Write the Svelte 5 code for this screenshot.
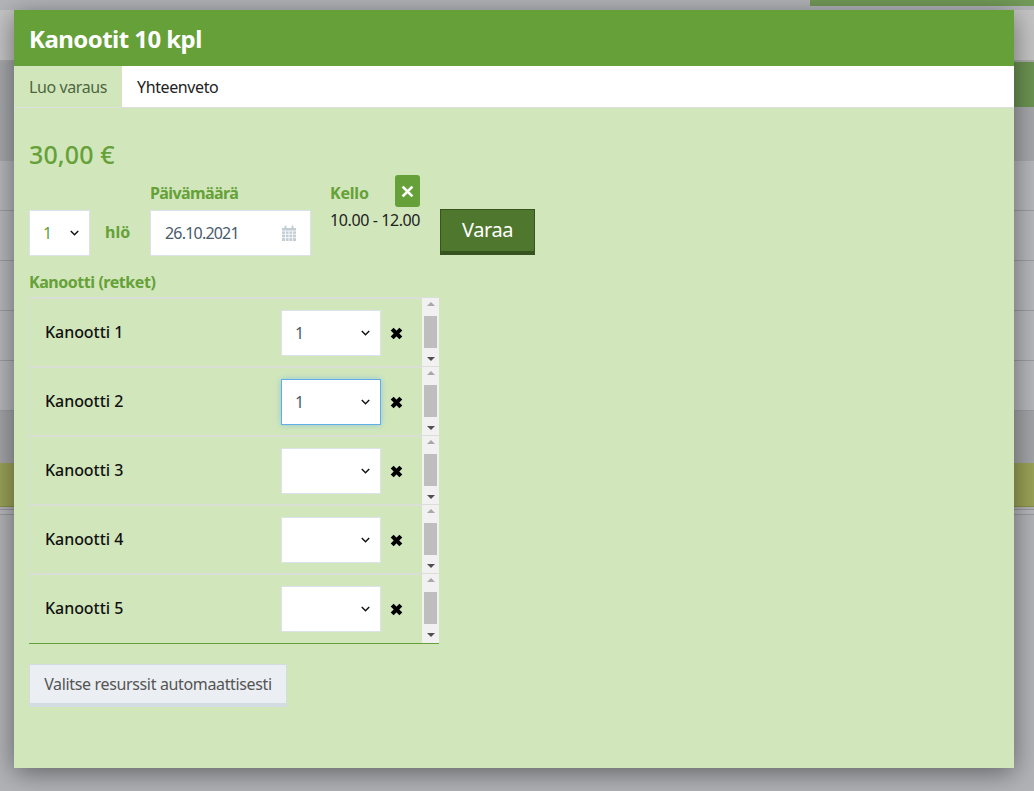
<script>
  const rows = [
    { name: 'Kanootti 1', value: '1', focus: false },
    { name: 'Kanootti 2', value: '1', focus: true },
    { name: 'Kanootti 3', value: '', focus: false },
    { name: 'Kanootti 4', value: '', focus: false },
    { name: 'Kanootti 5', value: '', focus: false }
  ];
</script>

<div class="page">
  <div class="strip top"><span class="topbar"></span></div>
  <div class="strip hero"></div>
  <div class="strip nav"><span class="navbar"></span></div>
  <div class="strip dark d1"></div>
  <div class="strip line"></div>
  <div class="strip line"></div>
  <div class="strip line"></div>
  <div class="strip line"></div>
  <div class="strip line"></div>
  <div class="strip dark d2"></div>
  <div class="strip olive"></div>
  <div class="strip foot"></div>
</div>

<section class="modal">
  <header class="head">Kanootit 10 kpl</header>
  <nav class="tabs">
    <span class="tab active">Luo varaus</span>
    <span class="tab">Yhteenveto</span>
  </nav>
  <div class="body">
    <div class="price">30,00 €</div>
    <div class="controls">
      <div class="field people">
        <div class="selwrap">
          <select class="sel green"><option>1</option></select>
          <svg class="chev" viewBox="0 0 8 5" width="9" height="6"><path d="M.7.8 4 4 7.3.8" fill="none" stroke="#111" stroke-width="1.3"/></svg>
        </div>
      </div>
      <span class="hlo">hlö</span>
      <div class="field date">
        <span class="lbl tight">Päivämäärä</span>
        <div class="datebox">
          <span class="datetext">26.10.2021</span>
          <svg viewBox="0 0 16 16" width="16" height="16"><path fill="#c3cdd6" d="M1 3h2.500V1.500a1 1 0 0 1 2 0V3h5V1.500a1 1 0 0 1 2 0V3H15v13H1z"/><path stroke="#fff" stroke-width=".8" d="M1 6h14M1 9.300h14M1 12.600h14M4.500 6v10M8 6v10M11.500 6v10"/></svg>
        </div>
      </div>
      <div class="time">
        <div class="timehead">
          <span class="lbl kello">Kello</span>
          <button class="clear" aria-label="Poista">
            <svg viewBox="0 0 12 12" width="13" height="13"><path d="M1.500 1.500l9 9M10.500 1.500l-9 9" stroke="#fff" stroke-width="2.600"/></svg>
          </button>
        </div>
        <div class="hours">10.00 - 12.00</div>
      </div>
      <button class="book">Varaa</button>
    </div>

    <div class="lbl restitle">Kanootti (retket)</div>
    <div class="list">
      {#each rows as r}
        <div class="row">
          <span class="name">{r.name}</span>
          <div class="selwrap small">
            <select class="sel" class:focus={r.focus} value={r.value}>
              <option value=""></option>
              <option value="1">1</option>
            </select>
            <svg class="chev" viewBox="0 0 8 5" width="9" height="6"><path d="M.7.8 4 4 7.3.8" fill="none" stroke="#111" stroke-width="1.3"/></svg>
          </div>
          <svg class="cross" viewBox="0 0 12 12" width="13" height="13"><path d="M2 2l8 8M10 2l-8 8" stroke="#000" stroke-width="3.800"/></svg>
          <div class="scroll">
            <span class="up"></span>
            <span class="thumb"></span>
            <span class="down"></span>
          </div>
        </div>
      {/each}
    </div>
    <button class="auto">Valitse resurssit automaattisesti</button>
  </div>
</section>

<style>
  :global(body) {
    margin: 0;
    height: 791px;
    overflow: hidden;
    background: #b2b3b7;
    font-family: "Noto Sans", sans-serif;
  }
  .page {
    height: 791px;
    display: flex;
    flex-direction: column;
    overflow: hidden;
  }
  .strip { flex: none; }
  .top { height: 10px; background: #b4b5b9; }
  .topbar { display: block; height: 6px; margin-left: 810px; background: #729a58; }
  .hero { height: 50px; background: #c4c4c5; border-bottom: 2px solid #aaa; }
  .nav { height: 45px; background: #a6a7aa; }
  .navbar { display: block; height: 45px; margin-left: 600px; background: #6b9253; }
  .d1 { height: 54px; background: #a6a7aa; }
  .line { height: 49px; background: #b6b7bb; border-bottom: 1px solid #9b9ca0; }
  .d2 { height: 52px; background: #a3a4a7; }
  .olive { height: 43px; background: #9aa257; border-bottom: 1px solid #86904a; }
  .foot { height: 280px; margin-top: 2px; background: #b2b3b7; border-top: 1px solid #98999c; }
  .foot { box-shadow: inset 0 4px 0 #b6b7bb, inset 0 5px 0 #98999c; }

  .modal {
    position: absolute;
    left: 14px;
    top: 10px;
    width: 1000px;
    height: 758px;
    background: #d1e7bb;
    box-shadow: 0 5px 25px rgba(0, 0, 0, 0.45);
    display: flex;
    flex-direction: column;
  }
  .head {
    height: 56px;
    box-sizing: border-box;
    padding-left: 15px;
    display: flex;
    align-items: center;
    background: #66a038;
    color: #fff;
    font-size: 24px;
    font-weight: 700;
    letter-spacing: -0.55px;
  }
  .tabs {
    height: 41px;
    display: flex;
    background: #fff;
    border-bottom: 1px solid #dcdfdc;
  }
  .tab {
    display: flex;
    align-items: center;
    padding: 0 15px;
    font-size: 16px;
    letter-spacing: -0.4px;
    color: #222;
  }
  .tab.active { background: #d1e7bb; color: #4d6640; }
  .body { padding: 30px 15px 0; flex: 1; }
  .price { color: #66a038; font-size: 25px; font-weight: 500; line-height: 32px; letter-spacing: 0.1px; }
  .controls { display: flex; align-items: flex-start; margin-top: 13px; height: 89px; }
  .field { display: flex; flex-direction: column; }
  .people { margin-top: 27px; width: 61px; }
  .lbl { color: #66a038; font-size: 16px; font-weight: 700; line-height: 20px; letter-spacing: -0.45px; }
  .tight { letter-spacing: -0.6px; }
  .hlo { margin: 39px 0 0 15px; width: 45px; color: #66a038; font-size: 16px; font-weight: 700; line-height: 20px; }
  .date { width: 161px; margin-right: 19px; gap: 7px; }
  .selwrap { position: relative; }
  .sel {
    appearance: none;
    display: block;
    width: 100%;
    height: 46px;
    box-sizing: border-box;
    padding: 0 13px;
    background: #fff;
    border: 1px solid #dbe2ea;
    border-radius: 0;
    font: inherit;
    font-size: 16px;
    color: #495b6b;
    outline: none;
  }
  .sel.green { color: #66a038; }
  .sel.focus { border-color: #62aee8; box-shadow: 0 0 6px rgba(98, 174, 232, 0.55); }
  .chev { position: absolute; right: 11px; top: 20px; pointer-events: none; }
  .datebox {
    height: 46px;
    box-sizing: border-box;
    padding: 0 13px 0 14px;
    background: #fff;
    border: 1px solid #dbe2ea;
    display: flex;
    align-items: center;
    justify-content: space-between;
    font-size: 16px;
    color: #495b6b;
  }
  .datetext { letter-spacing: -0.8px; }
  .time { width: 110px; margin-top: -8px; }
  .timehead { display: flex; align-items: center; justify-content: space-between; height: 32px; width: 90px; }
  .kello { margin-top: 4px; letter-spacing: -0.2px; }
  .clear {
    width: 25px;
    height: 32px;
    padding: 0;
    border: 0;
    border-radius: 3px;
    background: #66a038;
    display: flex;
    align-items: center;
    justify-content: center;
  }
  .hours { font-size: 16px; color: #222; line-height: 20px; margin-top: 3px; letter-spacing: -0.4px; }
  .book {
    width: 95px;
    height: 46px;
    margin-top: 26px;
    padding: 0 0 3px;
    box-sizing: border-box;
    background: #4f772d;
    border: 1px solid #375420;
    border-bottom-width: 4px;
    color: #fff;
    font: inherit;
    font-size: 20px;
    letter-spacing: -0.4px;
  }
  .list { width: 410px; margin-top: 5px; padding-bottom: 1px; border-bottom: 1px solid #66a038; }
  .row {
    height: 69px;
    box-sizing: border-box;
    display: flex;
    align-items: center;
    position: relative;
    border-top: 2px solid #d9dfd4;
    border-left: 1px solid #d9dfd4;
    padding-left: 15px;
  }
  .name { width: 236px; font-size: 16px; font-weight: 500; color: #111; margin-bottom: 2px; letter-spacing: -0.05px; }
  .small { width: 100px; }
  .cross { margin-left: 9px; margin-top: 2px; }
  .scroll {
    position: absolute;
    right: 0;
    top: -1px;
    bottom: -1px;
    width: 17px;
    background: #f1f1f1;
  }
  .thumb { position: absolute; left: 2px; right: 2px; top: 18px; height: 32px; background: #bebebe; }
  .up, .down { position: absolute; left: 5px; width: 0; height: 0; border: 4px solid transparent; }
  .up { top: 4px; border-top: 0; border-bottom: 4px solid #a8a8a8; }
  .down { bottom: 6px; border-bottom: 0; border-top: 4px solid #505050; }
  .auto {
    display: block;
    margin-top: 20px;
    width: 258px;
    height: 43px;
    box-sizing: border-box;
    padding: 0;
    background: #ebeff3;
    border: 1px solid #d3dbe3;
    border-bottom-width: 4px;
    color: #555;
    font: inherit;
    font-size: 16px;
    letter-spacing: -0.35px;
  }
</style>
